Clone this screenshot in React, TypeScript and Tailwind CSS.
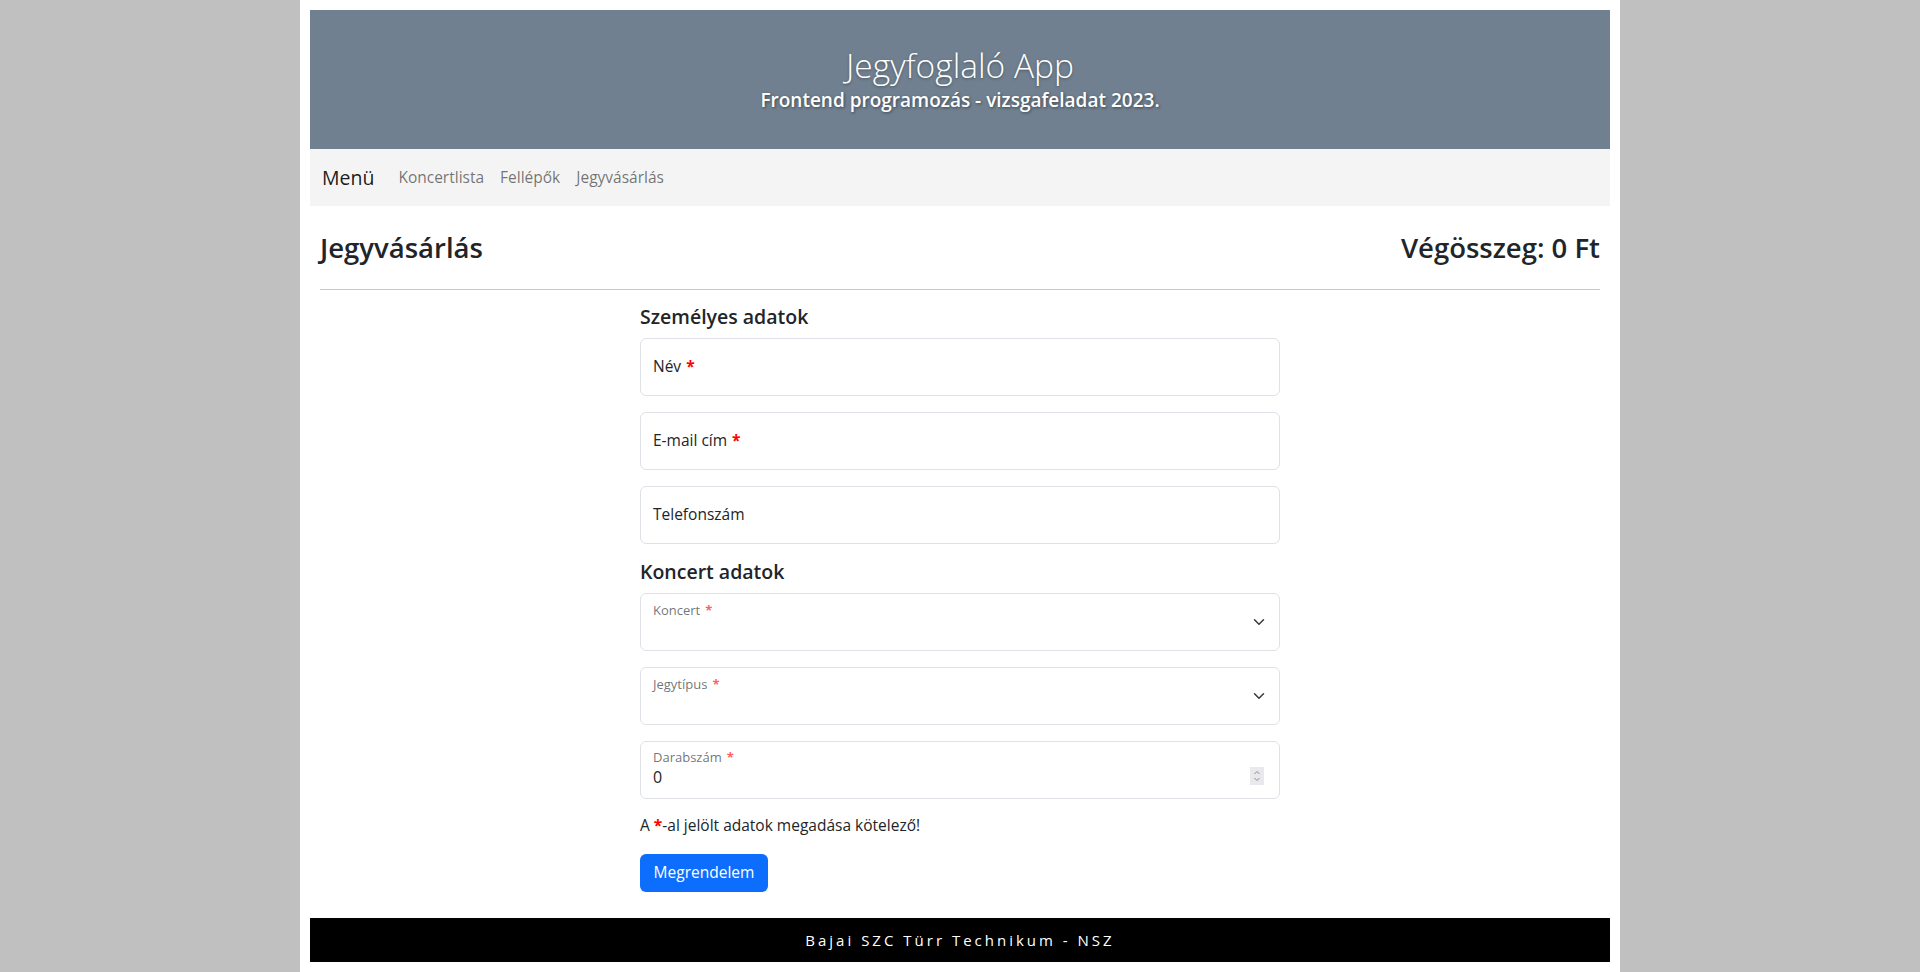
import React from "react";

const font = { fontFamily: "'Open Sans', 'Noto Sans', sans-serif" };

function Req() {
  return <span className="ml-[5px] font-bold text-[#ff0000]">*</span>;
}

function TextField(props: { label: string; required?: boolean }) {
  return (
    <div className="mb-4 flex h-[58px] items-center rounded-md border border-[#dee2e6] bg-white px-3 text-[15.5px] text-[#212529]">
      {props.label}
      {props.required && <Req />}
    </div>
  );
}

function Chevron() {
  return (
    <svg width="16" height="12" viewBox="0 0 16 16" className="shrink-0">
      <path d="m2 5 6 6 6-6" fill="none" stroke="#343a40" strokeWidth="2" strokeLinecap="round" strokeLinejoin="round" />
    </svg>
  );
}

function SelectField(props: { label: string }) {
  return (
    <div className="mb-4 flex h-[58px] items-start justify-between rounded-md border border-[#dee2e6] bg-white pl-3 pr-3">
      <div className="pt-[6px] text-[13px] leading-[20px] text-[#212529a6]">
        {props.label}
        <span className="ml-[5px] font-bold text-[#ff0000a6]">*</span>
      </div>
      <div className="flex h-full items-center">
        <Chevron />
      </div>
    </div>
  );
}

function NumberField() {
  return (
    <div className="mb-[14px] flex h-[58px] items-center justify-between rounded-md border border-[#dee2e6] bg-white pl-3 pr-[15px]">
      <div className="-mt-[4px] flex flex-col">
        <div className="text-[13px] leading-[18px] text-[#212529a6]">
          Darabszám
          <span className="ml-[5px] font-bold text-[#ff0000a6]">*</span>
        </div>
        <div className="text-[16px] leading-[22px] text-[#212529]">0</div>
      </div>
      <div className="mt-[12px] flex h-[18px] w-[14px] flex-col items-center justify-center bg-[#e9e9ed]">
        <svg width="8" height="14" viewBox="0 0 8 14">
          <path d="M1.5 5 4 2.5 6.5 5M1.5 9 4 11.5 6.5 9" fill="none" stroke="#8a8a93" strokeWidth="1" />
        </svg>
      </div>
    </div>
  );
}

export default function App() {
  return (
    <div className="min-h-screen bg-[#c0c0c0]" style={font}>
      <div className="mx-auto w-[1320px] bg-white p-[10px]">
        <header className="flex h-[139px] flex-col items-center justify-center bg-[#708090] pt-[5px] text-white">
          <h1 className="text-[33.5px] font-light leading-[36px] [text-shadow:0_1px_3px_rgba(0,0,0,0.35)]">
            Jegyfoglaló App
          </h1>
          <p className="text-[19px] font-semibold leading-[34px] [text-shadow:1px_1px_3px_rgba(0,0,0,0.45)]">
            Frontend programozás - vizsgafeladat 2023.
          </p>
        </header>

        <nav className="flex h-[57px] items-center bg-[#f4f4f4] pl-3 text-[15.5px]">
          <span className="mr-[24px] text-[19.5px] text-[#000000e6]">Menü</span>
          <div className="flex gap-4 text-[#0000008c]">
            <span>Koncertlista</span>
            <span>Fellépők</span>
            <span>Jegyvásárlás</span>
          </div>
        </nav>

        <main className="px-[10px]">
          <div className="flex h-[83px] items-center justify-between text-[27.5px] font-semibold text-[#212529]">
            <h2>Jegyvásárlás</h2>
            <h2>Végösszeg: 0 Ft</h2>
          </div>
          <hr className="border-[#c6c7c8]" />

          <form className="mx-auto w-[640px]">
            <h4 className="mt-[15px] mb-[9px] text-[19.5px] font-semibold leading-[24px] text-[#212529]">Személyes adatok</h4>
            <TextField label="Név" required />
            <TextField label="E-mail cím" required />
            <TextField label="Telefonszám" />

            <h4 className="mb-[9px] text-[19.5px] font-semibold leading-[24px] text-[#212529]">Koncert adatok</h4>
            <SelectField label="Koncert" />
            <SelectField label="Jegytípus" />
            <NumberField />

            <p className="text-[15.5px] leading-[24px] text-[#212529]">
              A <span className="font-bold text-[#ff0000]">*</span>-al jelölt adatok megadása kötelező!
            </p>
            <button
              type="button"
              className="mt-[17px] h-[38px] w-[128px] rounded-md bg-[#0d6efd] text-[15.5px] text-white"
            >
              Megrendelem
            </button>
          </form>
        </main>

        <footer className="mt-[26px] flex h-[44px] items-center justify-center bg-black text-[15px] tracking-[3px] text-white">
          Bajai SZC Türr Technikum - NSZ
        </footer>
      </div>
    </div>
  );
}
